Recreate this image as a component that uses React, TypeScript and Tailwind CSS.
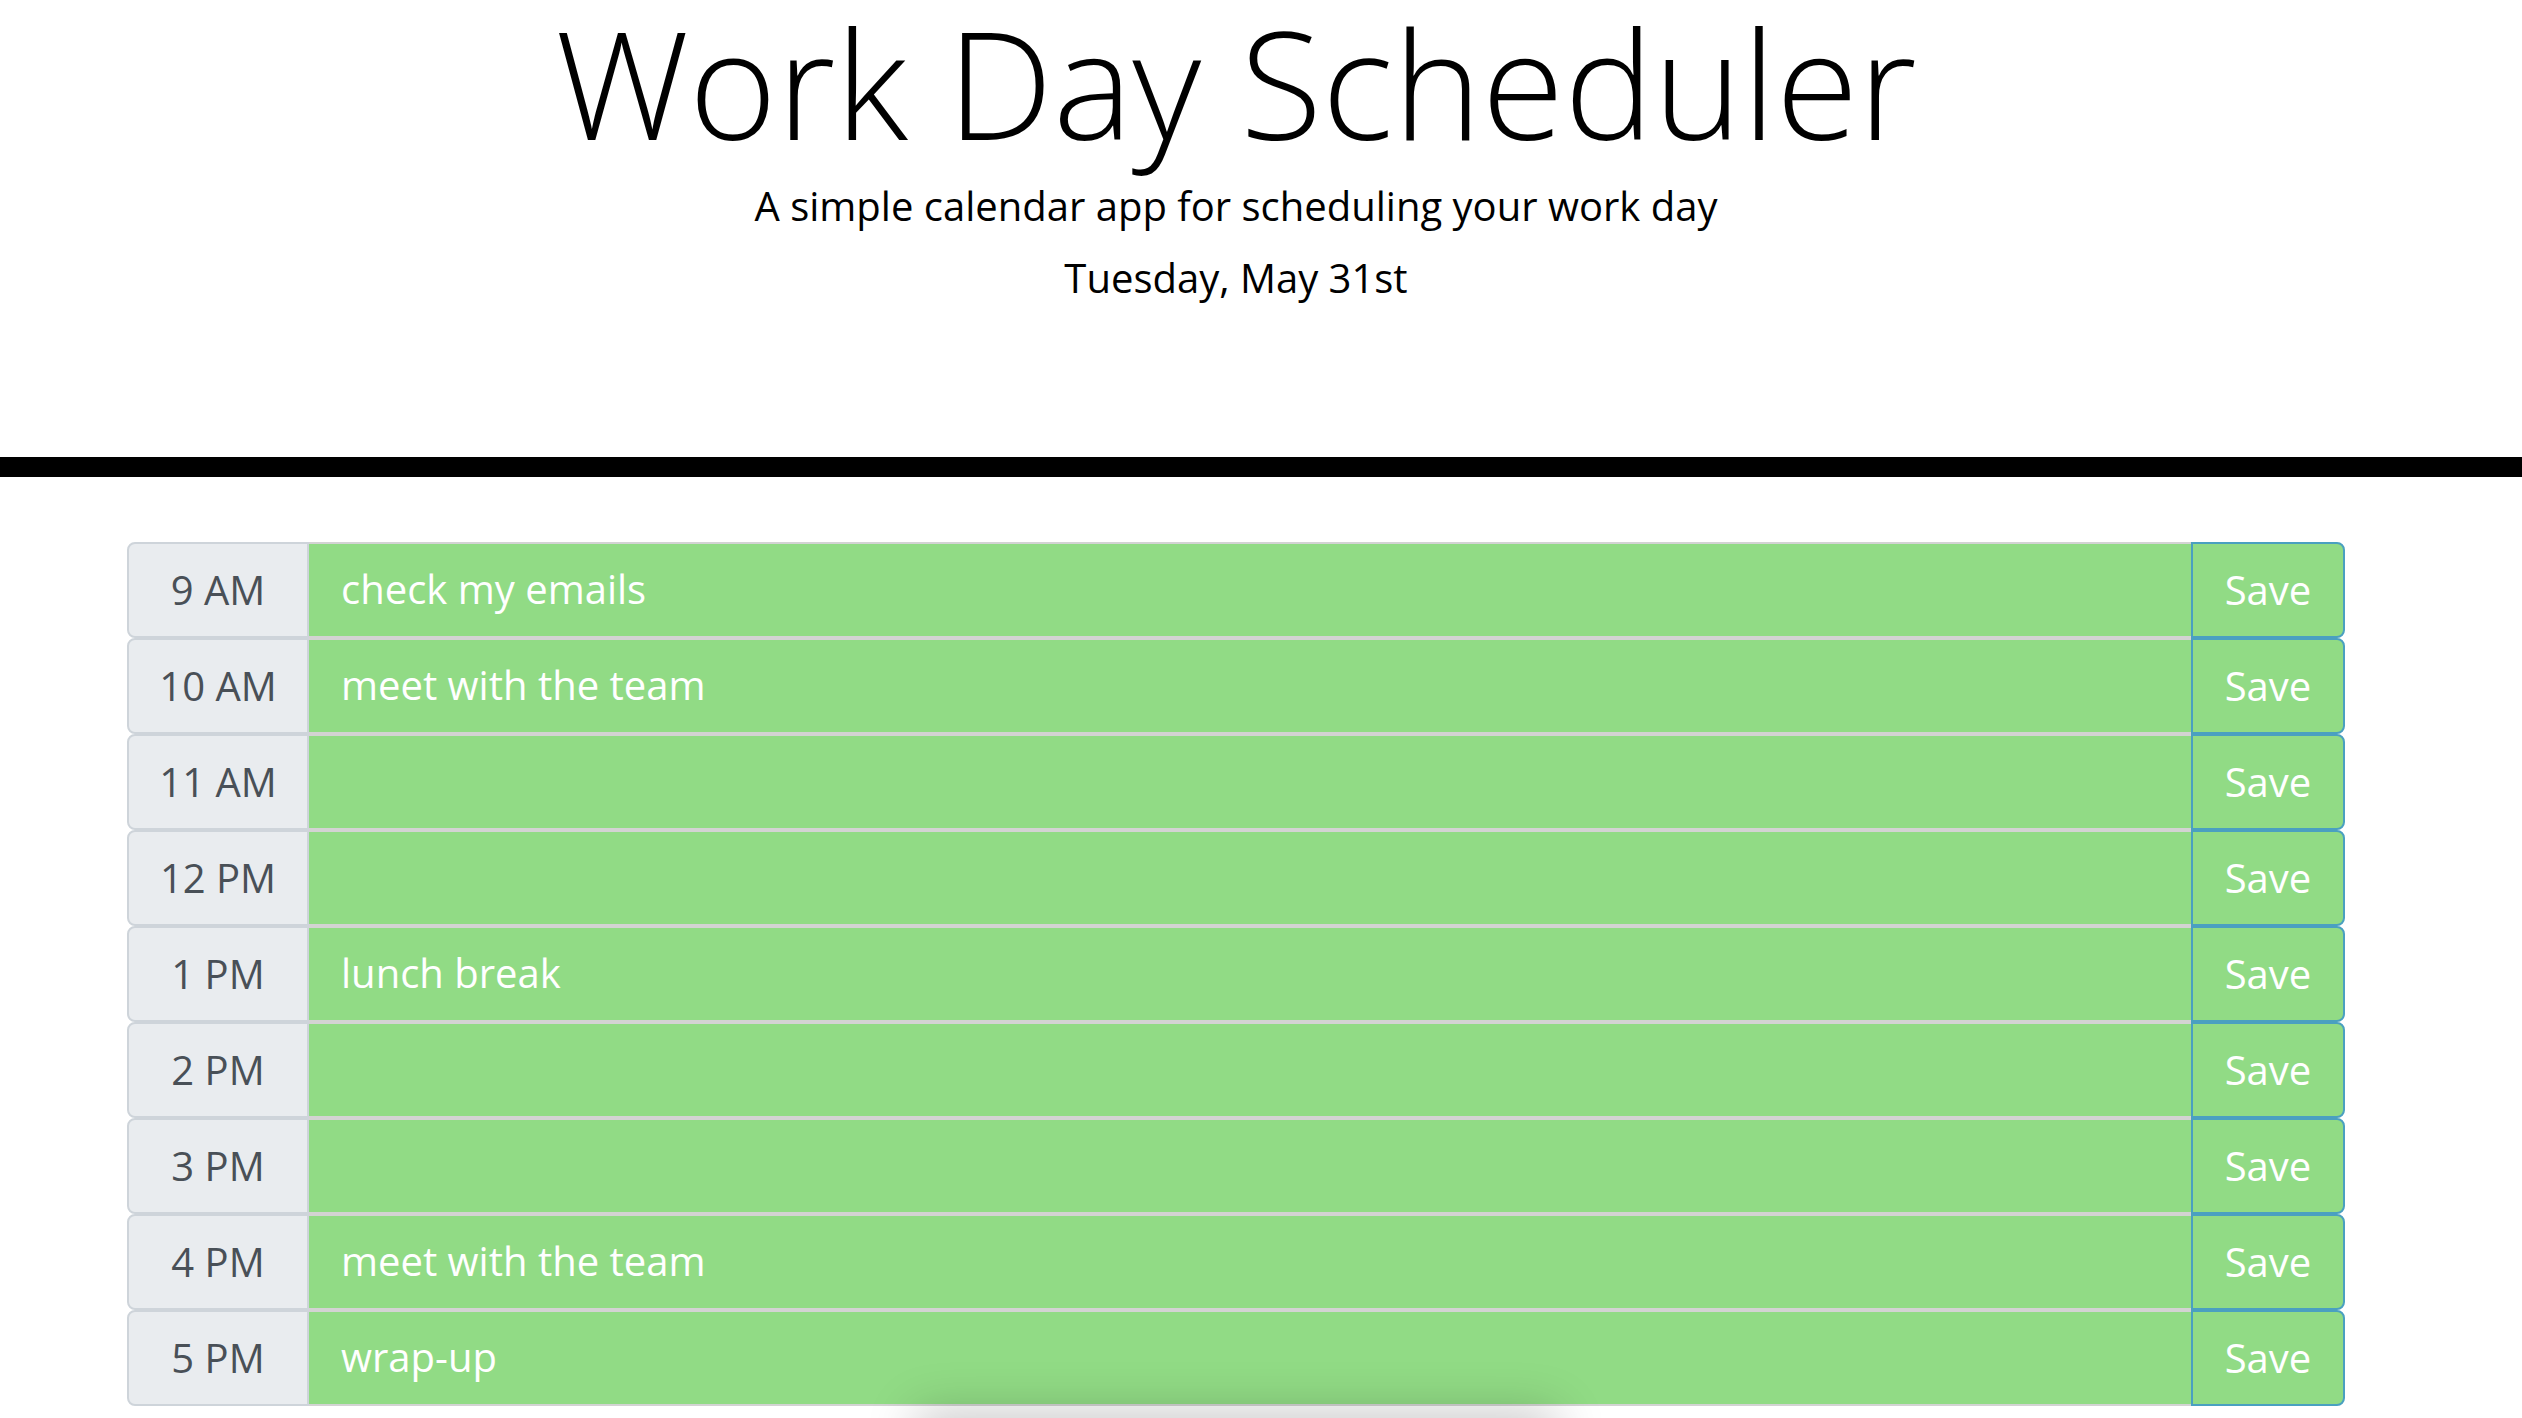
import React from 'react';

const hours = [
  { label: '9 AM', text: 'check my emails' },
  { label: '10 AM', text: 'meet with the team' },
  { label: '11 AM', text: '' },
  { label: '12 PM', text: '' },
  { label: '1 PM', text: 'lunch break' },
  { label: '2 PM', text: '' },
  { label: '3 PM', text: '' },
  { label: '4 PM', text: 'meet with the team' },
  { label: '5 PM', text: 'wrap-up' },
];

const HourRow: React.FC<{ label: string; text: string }> = ({ label, text }) => (
  <div className="flex h-[96px]">
    <div className="w-[182px] shrink-0 flex items-center justify-center bg-[#e9ecef] border-2 border-[#ced4da] rounded-l-[8px] text-[40px] text-[#495057]">
      {label}
    </div>
    <textarea
      defaultValue={text}
      className="flex-1 resize-none bg-[#91db85] border-y-2 border-[#d3d3d3] text-white text-[40px] leading-[60px] px-[32px] pt-[15px] outline-none overflow-hidden"
    />
    <button className="w-[154px] shrink-0 bg-[#91db85] border-2 border-[#4aa0c0] rounded-r-[8px] text-white text-[40px]">
      Save
    </button>
  </div>
);

const App: React.FC = () => {
  return (
    <div className="min-h-screen bg-white font-['Open_Sans',sans-serif]">
      <header className="w-[2472px] text-center text-black pt-[7px] pb-[149px]">
        <h1 className="text-[150px] leading-none font-light">Work Day Scheduler</h1>
        <p className="text-[40px] leading-[60px] mt-[19px]">A simple calendar app for scheduling your work day</p>
        <p className="text-[40px] leading-[60px] mt-[12px]">Tuesday, May 31st</p>
      </header>
      <div className="h-[20px] bg-black" />
      <main className="w-[2472px] pt-[65px] flex flex-col items-center">
        <div className="w-[2218px] flex flex-col">
          {hours.map((h) => (
            <HourRow key={h.label} label={h.label} text={h.text} />
          ))}
        </div>
        <div className="relative z-10 mt-[16px] w-[620px] h-[40px] bg-white shadow-[0_0_50px_10px_rgba(0,0,0,0.22)]" />
      </main>
    </div>
  );
};

export default App;
